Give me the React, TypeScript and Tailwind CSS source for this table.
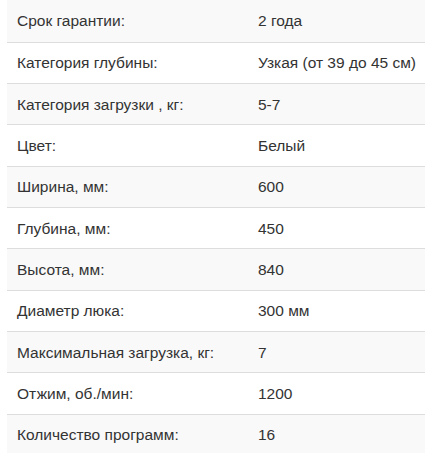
import { FC } from "react";

type Spec = {
  label: string;
  value: string;
};

const specs: Spec[] = [
  { label: "Срок гарантии:", value: "2 года" },
  { label: "Категория глубины:", value: "Узкая (от 39 до 45 см)" },
  { label: "Категория загрузки , кг:", value: "5-7" },
  { label: "Цвет:", value: "Белый" },
  { label: "Ширина, мм:", value: "600" },
  { label: "Глубина, мм:", value: "450" },
  { label: "Высота, мм:", value: "840" },
  { label: "Диаметр люка:", value: "300 мм" },
  { label: "Максимальная загрузка, кг:", value: "7" },
  { label: "Отжим, об./мин:", value: "1200" },
  { label: "Количество программ:", value: "16" },
];

const App: FC = () => {
  return (
    <div className="min-h-screen bg-white pl-[7px] font-['Liberation_Sans',Arial,sans-serif] text-[15.5px] text-[#333]">
      <div className="flex flex-col">
        {specs.map((spec, i) => (
          <div
            key={spec.label}
            className={
              (i % 2 === 0 ? "bg-[#f9f9f9] " : "bg-white ") +
              (i === 0
                ? "h-[41.6px] "
                : "h-[41.35px] border-t border-[#dddddd] ") +
              "flex items-center"
            }
          >
            <div className="w-[241px] shrink-0 whitespace-nowrap px-[10px] leading-[21px]">
              {spec.label}
            </div>
            <div className="whitespace-nowrap pl-[10px] leading-[21px]">
              {spec.value}
            </div>
          </div>
        ))}
      </div>
    </div>
  );
};

export default App;
